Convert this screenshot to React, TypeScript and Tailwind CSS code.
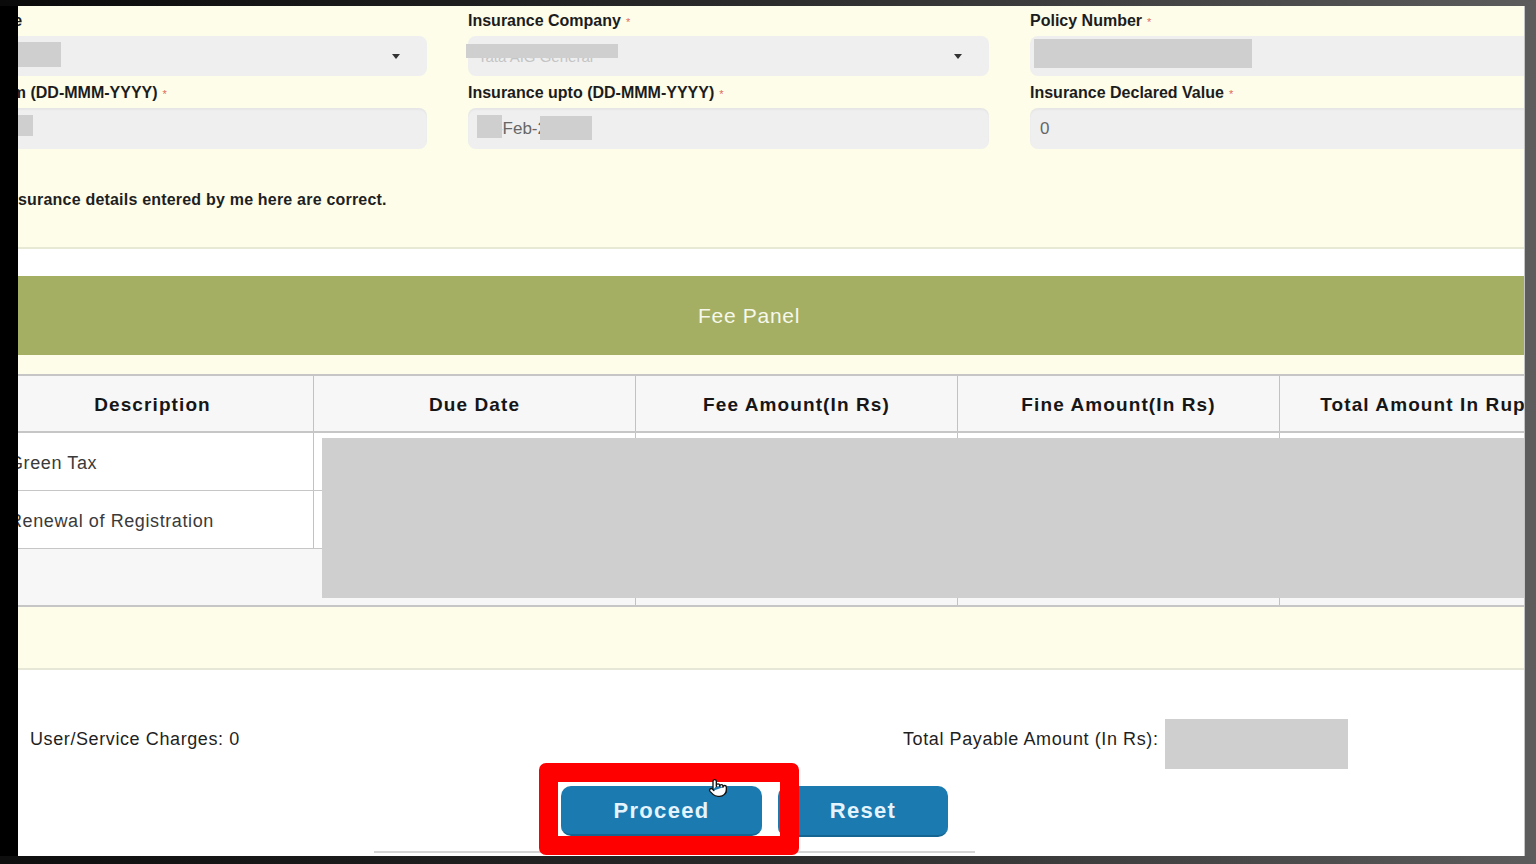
import React from "react";
import { Pointer } from "lucide-react";

function Label({ text, star = true }: { text: string; star?: boolean }) {
  return (
    <div className="h-[18px] leading-[18px] text-[16px] font-bold text-[#1c1c1c] whitespace-nowrap mb-[7px] pt-[1px]">
      {text}
      {star && <span className="text-[#e06a5a] text-[11px] font-normal ml-[5px] align-middle">*</span>}
    </div>
  );
}

function Caret() {
  return <div className="w-0 h-0 border-l-[4px] border-r-[4px] border-t-[5px] border-l-transparent border-r-transparent border-t-[#333333]" />;
}

export default function App() {
  const cell = "border-r border-[#c2c2c2] flex items-center";
  return (
    <div className="w-[1536px] h-[864px] bg-black flex flex-col overflow-hidden font-['Liberation_Sans',Arial,sans-serif]">
      <div className="h-[6px] bg-linear-to-r from-[#0a0a0a] via-[#2c2c2c] to-[#5c5c5c]" />
      <div className="h-[850px] flex">
        <div className="w-[18px] bg-black" />
        <div className="w-[1506px] overflow-hidden flex flex-col">
          {/* Insurance form panel */}
          <div className="h-[243px] bg-[#fdfdea] border-b-2 border-[#e8e9d4] overflow-hidden">
            <div className="ml-[-112px] pt-[5px] grid grid-cols-[521px_521px_521px] gap-x-[41px] gap-y-[7px]">
              <div>
                <Label text="Insurance Type" star={false} />
                <div className="relative h-[40px] rounded-[8px] bg-[#efefef] flex items-center justify-end pr-[27px]">
                  <div className="absolute left-[8px] top-[6px] w-[147px] h-[25px] bg-[#cfcfcf]" />
                  <Caret />
                </div>
              </div>
              <div>
                <Label text="Insurance Company" />
                <div className="relative h-[40px] rounded-[8px] bg-[#efefef] flex items-center justify-between pl-[10px] pr-[27px]">
                  <span className="text-[15px] leading-[15px] text-[#c4c4c4] mt-[1px]">Tata AIG General</span>
                  <div className="absolute left-[-2px] top-[8px] w-[152px] h-[14px] bg-[#cfcfcf]" />
                  <Caret />
                </div>
              </div>
              <div>
                <Label text="Policy Number" />
                <div className="relative h-[40px] rounded-[8px] bg-[#efefef]">
                  <div className="absolute left-[4px] top-[3px] w-[218px] h-[29px] bg-[#cfcfcf]" />
                </div>
              </div>
              <div>
                <Label text="Insurance From (DD-MMM-YYYY)" />
                <div className="relative h-[41px] rounded-[8px] bg-[#efefef] shadow-[inset_0_2px_2px_rgba(0,0,0,0.04)]">
                  <div className="absolute left-[8px] top-[7px] w-[119px] h-[21px] bg-[#cfcfcf]" />
                </div>
              </div>
              <div>
                <Label text="Insurance upto (DD-MMM-YYYY)" />
                <div className="relative h-[41px] rounded-[8px] bg-[#efefef] shadow-[inset_0_2px_2px_rgba(0,0,0,0.04)] flex items-center pl-[10px]">
                  <span className="text-[17px] text-[#666666]">14-Feb-2025</span>
                  <div className="absolute left-[9px] top-[7px] w-[25px] h-[23px] bg-[#cfcfcf]" />
                  <div className="absolute left-[72px] top-[8px] w-[52px] h-[24px] bg-[#cfcfcf]" />
                </div>
              </div>
              <div>
                <Label text="Insurance Declared Value" />
                <div className="h-[41px] rounded-[8px] bg-[#efefef] shadow-[inset_0_2px_2px_rgba(0,0,0,0.04)] flex items-center pl-[10px]">
                  <span className="text-[17px] text-[#666666]">0</span>
                </div>
              </div>
            </div>
            <div className="mt-[42px] h-[18px] leading-[18px] text-[16px] font-bold tracking-[0.2px] text-[#1f1f1f] whitespace-nowrap">
              surance details entered by me here are correct.
            </div>
          </div>

          <div className="h-[27px] bg-white" />

          {/* Fee panel header */}
          <div className="h-[79px] bg-[#a5af63] flex items-center justify-center pr-[44px]">
            <span className="text-[21px] tracking-[0.7px] text-[#f7f8ec]">Fee Panel</span>
          </div>

          {/* Table */}
          <div className="bg-[#fdfdea] pt-[19px] pb-[61px] border-b-2 border-[#e6e7d6]">
            <div className="relative ml-[-26px] w-[1610px] bg-white border-t-2 border-[#c6c6c6]">
              <div className="grid grid-cols-[322px_322px_322px_322px_322px] bg-[#f7f7f7] border-b-2 border-[#c6c6c6] h-[57px]">
                {["Description", "Due Date", "Fee Amount(In Rs)", "Fine Amount(In Rs)", "Total Amount In Rupees"].map((h) => (
                  <div key={h} className={cell + " justify-center pt-[3px] text-[19px] font-bold tracking-[1.1px] text-[#161616] whitespace-nowrap"}>
                    {h}
                  </div>
                ))}
              </div>
              {["Green Tax", "Renewal of Registration"].map((d) => (
                <div key={d} className="grid grid-cols-[322px_322px_322px_322px_322px] h-[58px] border-b border-[#c6c6c6] bg-white">
                  <div className={cell + " pl-[17px] pt-[3px] text-[18px] tracking-[0.6px] text-[#3a3a3a] whitespace-nowrap"}>{d}</div>
                  <div className={cell} />
                  <div className={cell} />
                  <div className={cell} />
                  <div className={cell} />
                </div>
              ))}
              <div className="grid grid-cols-[322px_322px_322px_322px_322px] h-[58px] border-b-2 border-[#c6c6c6] bg-[#f7f7f7]">
                <div className={cell + " col-span-2"} />
                <div className={cell} />
                <div className={cell} />
                <div className={cell} />
              </div>
              <div className="absolute left-[330px] top-[62px] w-[1300px] h-[160px] bg-[#cfcfcf]" />
            </div>
          </div>

          {/* Footer */}
          <div className="relative h-[186px] bg-white pt-[49px]">
            <div className="grid grid-cols-[885px_auto] items-center h-[50px]">
              <div className="pl-[12px] mb-[9px] text-[18px] tracking-[0.6px] text-[#1f1f1f] whitespace-nowrap">User/Service Charges: 0</div>
              <div className="flex items-center gap-[6px]">
                <span className="mb-[9px] text-[18px] tracking-[0.6px] text-[#1f1f1f] whitespace-nowrap">Total Payable Amount (In Rs):</span>
                <div className="w-[183px] h-[50px] bg-[#cfcfcf]" />
              </div>
            </div>
            <div className="mt-[17px] pl-[543px] flex items-start gap-[16px]">
              <button className="w-[201px] h-[50px] rounded-[10px] bg-[#1b7bb1] border-b-2 border-[#146591] text-[22px] font-bold tracking-[1.3px] text-[#e4f4ff]">
                Proceed
              </button>
              <button className="w-[170px] h-[51px] rounded-[10px] bg-[#1b7bb1] border-b-2 border-[#146591] text-[22px] font-bold tracking-[1.3px] text-[#e4f4ff]">
                Reset
              </button>
            </div>
            <div className="mt-[14px] ml-[356px] w-[601px] h-[2px] bg-[#d4d4d4]" />
            <div className="absolute left-[521px] top-[93px] w-[260px] h-[92px] border-[19px] border-[#ff0000] rounded-[7px]" />
            <div className="absolute left-[690px] top-[108px]">
              <Pointer size={20} fill="#ffffff" stroke="#111111" strokeWidth={1.6} />
            </div>
          </div>
        </div>
        <div className="w-[12px] bg-[#5c5c5c] border-l border-[#c4c4c4]" />
      </div>
      <div className="h-[8px] bg-linear-to-r from-[#0e0e0e] via-[#2a2a2a] to-[#5c5c5c]" />
    </div>
  );
}
